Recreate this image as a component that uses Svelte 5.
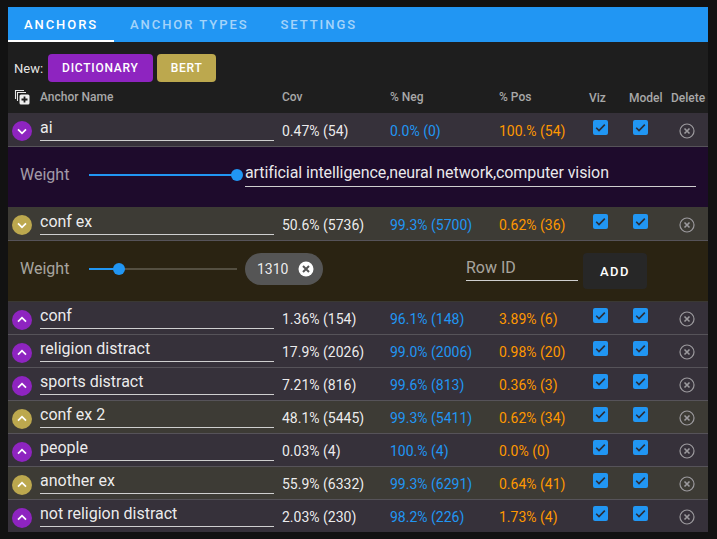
<script>
  const anchors = [
    { name: 'ai', type: 'dict', open: true, cov: '0.47% (54)', neg: '0.0% (0)', pos: '100.% (54)', terms: 'artificial intelligence,neural network,computer vision', weight: 100 },
    { name: 'conf ex', type: 'bert', open: true, cov: '50.6% (5736)', neg: '99.3% (5700)', pos: '0.62% (36)', chip: '1310', weight: 20 },
    { name: 'conf', type: 'dict', cov: '1.36% (154)', neg: '96.1% (148)', pos: '3.89% (6)' },
    { name: 'religion distract', type: 'dict', cov: '17.9% (2026)', neg: '99.0% (2006)', pos: '0.98% (20)' },
    { name: 'sports distract', type: 'dict', cov: '7.21% (816)', neg: '99.6% (813)', pos: '0.36% (3)' },
    { name: 'conf ex 2', type: 'bert', cov: '48.1% (5445)', neg: '99.3% (5411)', pos: '0.62% (34)' },
    { name: 'people', type: 'dict', cov: '0.03% (4)', neg: '100.% (4)', pos: '0.0% (0)' },
    { name: 'another ex', type: 'bert', cov: '55.9% (6332)', neg: '99.3% (6291)', pos: '0.64% (41)' },
    { name: 'not religion distract', type: 'dict', cov: '2.03% (230)', neg: '98.2% (226)', pos: '1.73% (4)' }
  ];
</script>

{#snippet check()}
  <svg class="check" viewBox="0 0 15 15">
    <rect width="15" height="15" rx="2" fill="#2196f3" />
    <path d="M3.2 7.8l2.8 2.8 5.8-6" fill="none" stroke="#2b2d36" stroke-width="1.6" />
  </svg>
{/snippet}

<div class="panel">
  <nav class="tabs">
    <span class="tab active">ANCHORS</span>
    <span class="tab">ANCHOR TYPES</span>
    <span class="tab">SETTINGS</span>
  </nav>

  <div class="new-row">
    <span class="new-label">New:</span>
    <button class="btn dict">DICTIONARY</button>
    <button class="btn bert">BERT</button>
  </div>

  <div class="grid head">
    <svg class="copy-icon" viewBox="0 0 16 16">
      <path d="M1.5 10V1.5H10M3.5 12V3.5H12" fill="none" stroke="#e8e8e8" stroke-width="1.1" />
      <rect x="5.5" y="5.5" width="10" height="10" rx="1.5" fill="#eee" />
      <path d="M10.5 7.5v6M7.5 10.5h6" stroke="#1e1e1e" stroke-width="1.8" />
    </svg>
    <span>Anchor Name</span>
    <span>Cov</span>
    <span>% Neg</span>
    <span>% Pos</span>
    <span class="low">Viz</span>
    <span class="low">Model</span>
    <span class="low">Delete</span>
  </div>

  {#each anchors as a}
    <div class="grid row {a.type}" class:open={a.open}>
      <span class="toggle {a.type}">
        <svg viewBox="0 0 20 20" class:flip={!a.open}>
          <path d="M6 8.4l4 4 4-4" fill="none" stroke="#fff" stroke-width="1.7" />
        </svg>
      </span>
      <div class="name"><span>{a.name}</span></div>
      <span class="cov">{a.cov}</span>
      <span class="neg">{a.neg}</span>
      <span class="pos">{a.pos}</span>
      <span class="cb">{@render check()}</span>
      <span class="cb">{@render check()}</span>
      <svg class="del" viewBox="0 0 16 16">
        <circle cx="8" cy="8" r="7" fill="none" stroke="#9c9a9e" stroke-width="1.2" />
        <path d="M5.5 5.5l5 5M10.5 5.5l-5 5" stroke="#9c9a9e" stroke-width="1.6" />
      </svg>
    </div>

    {#if a.open}
      <div class="detail {a.type}">
        <span class="weight">Weight</span>
        <div class="slider">
          <div class="fill" style="width: {a.weight}%"></div>
          <div class="thumb" style="left: {a.weight}%"></div>
        </div>
        {#if a.terms}
          <div class="terms"><span>{a.terms}</span></div>
        {:else}
          <span class="chip">
            {a.chip}
            <svg viewBox="0 0 16 16">
              <circle cx="8" cy="8" r="7.5" fill="#fff" />
              <path d="M5 5l6 6M11 5l-6 6" stroke="#555" stroke-width="2" />
            </svg>
          </span>
          <div class="row-id"><span>Row ID</span></div>
          <button class="btn add">ADD</button>
        {/if}
      </div>
    {/if}
  {/each}
</div>

<style>
  :global(body) {
    background: #121212;
  }

  .panel {
    width: 700px;
    margin: 7px 0 0 8px;
    background: #1e1e1e;
    font-family: Roboto, sans-serif;
    color: #fff;
  }

  .tabs {
    display: flex;
    height: 35px;
    background: #2196f3;
  }

  .tab {
    display: flex;
    align-items: center;
    justify-content: center;
    padding: 0 16px;
    min-width: 74px;
    font-size: 13px;
    font-weight: 500;
    letter-spacing: 1.95px;
    color: rgba(255, 255, 255, 0.6);
  }

  .tab.active {
    width: 74px;
    box-sizing: content-box;
    color: #fff;
    border-bottom: 2px solid #fff;
    height: 31px;
    padding-top: 2px;
  }

  .new-row {
    display: flex;
    align-items: center;
    box-sizing: border-box;
    height: 40px;
    padding-left: 6px;
    padding-top: 12px;
    gap: 4px;
    font-size: 13px;
  }

  .new-label {
    margin-right: 1px;
    color: rgba(255, 255, 255, 0.9);
  }

  .btn {
    border: 0;
    border-radius: 4px;
    height: 28px;
    padding: 0 14px;
    font-family: inherit;
    font-size: 12px;
    font-weight: 500;
    letter-spacing: 0.75px;
    color: #fff;
  }

  .btn.dict {
    background: #8e24c0;
  }

  .btn.bert {
    background: #bca84e;
  }

  .grid {
    display: grid;
    grid-template-columns: 32px 242px 108px 109px 90px 40px 42px 1fr;
    align-items: center;
  }

  .head {
    box-sizing: border-box;
    height: 31px;
    padding-bottom: 2px;
    font-size: 12px;
    font-weight: 500;
    color: #a8a8a8;
  }

  .low {
    margin-top: 2px;
  }

  .copy-icon {
    width: 16px;
    height: 16px;
    margin-left: 6px;
  }

  .row {
    height: 33px;
    box-sizing: border-box;
    border-bottom: 1px solid #565359;
    font-size: 14px;
  }

  .row.open {
    height: 34px;
  }

  .row:last-child {
    height: 32px;
    border-bottom: 0;
  }

  .row.dict {
    background: #36313a;
  }

  .row.bert {
    background: #3d3b35;
  }

  .toggle {
    width: 20px;
    height: 20px;
    margin-left: 4px;
    margin-top: 3px;
    border-radius: 50%;
  }

  .toggle.dict {
    background: #8e24c0;
  }

  .toggle.bert {
    background: #bca84e;
  }

  .toggle svg {
    display: block;
  }

  .flip {
    transform: rotate(180deg);
  }

  .name {
    align-self: start;
    width: 234px;
    height: 27px;
    box-sizing: border-box;
    padding-top: 2px;
    border-bottom: 1px solid #cfcfcf;
    font-size: 16px;
    line-height: 24px;
    color: rgba(255, 255, 255, 0.92);
  }

  .open .name {
    margin-top: 1px;
  }

  .cov {
    color: rgba(255, 255, 255, 0.92);
    margin-top: 2px;
  }

  .neg {
    color: #2196f3;
    margin-top: 2px;
  }

  .pos {
    color: #ff9800;
    margin-top: 2px;
  }

  .cb {
    display: flex;
    padding-left: 4px;
    margin-top: -5px;
  }

  .check {
    width: 15px;
    height: 15px;
  }

  .del {
    width: 16px;
    height: 16px;
    margin-left: 8px;
    margin-top: 1px;
  }

  .open .del {
    margin-top: 2px;
  }

  .detail {
    display: flex;
    align-items: center;
    height: 60px;
    padding-left: 12px;
    box-sizing: border-box;
    font-size: 16px;
  }

  .detail.dict {
    background: #1e0b2c;
    padding-bottom: 5px;
  }

  .detail.bert {
    height: 61px;
    padding-bottom: 4px;
    background: #2a2312;
    border-bottom: 1px solid #3a3833;
  }

  .weight {
    width: 69px;
    color: rgba(255, 255, 255, 0.6);
  }

  .bert .weight {
    margin-top: -1px;
  }

  .slider {
    position: relative;
    width: 148px;
    height: 2px;
    margin-right: 8px;
    background: rgba(255, 255, 255, 0.2);
  }

  .fill {
    height: 100%;
    background: #2196f3;
  }

  .thumb {
    position: absolute;
    top: -5px;
    width: 12px;
    height: 12px;
    margin-left: -6px;
    border-radius: 50%;
    background: #2196f3;
  }

  .terms {
    width: 451px;
    height: 25px;
    box-sizing: border-box;
    border-bottom: 1px solid #cfcfcf;
    line-height: 21px;
    letter-spacing: -0.09px;
    margin-top: -1px;
    color: rgba(255, 255, 255, 0.92);
  }

  .chip {
    display: flex;
    align-items: center;
    justify-content: space-between;
    width: 78px;
    height: 32px;
    box-sizing: border-box;
    padding: 0 9px 0 12px;
    border-radius: 16px;
    background: #555;
    font-size: 14px;
    color: rgba(255, 255, 255, 0.9);
  }

  .chip svg {
    width: 16px;
    height: 16px;
  }

  .row-id {
    width: 112px;
    height: 25px;
    box-sizing: border-box;
    margin-left: 143px;
    margin-top: -2px;
    border-bottom: 1px solid #cfcfcf;
    line-height: 24px;
    color: rgba(255, 255, 255, 0.6);
  }

  .btn.add {
    width: 64px;
    height: 36px;
    margin-left: 5px;
    margin-top: 4px;
    padding: 0;
    background: #272727;
    font-size: 13px;
    letter-spacing: 1.4px;
  }
</style>
